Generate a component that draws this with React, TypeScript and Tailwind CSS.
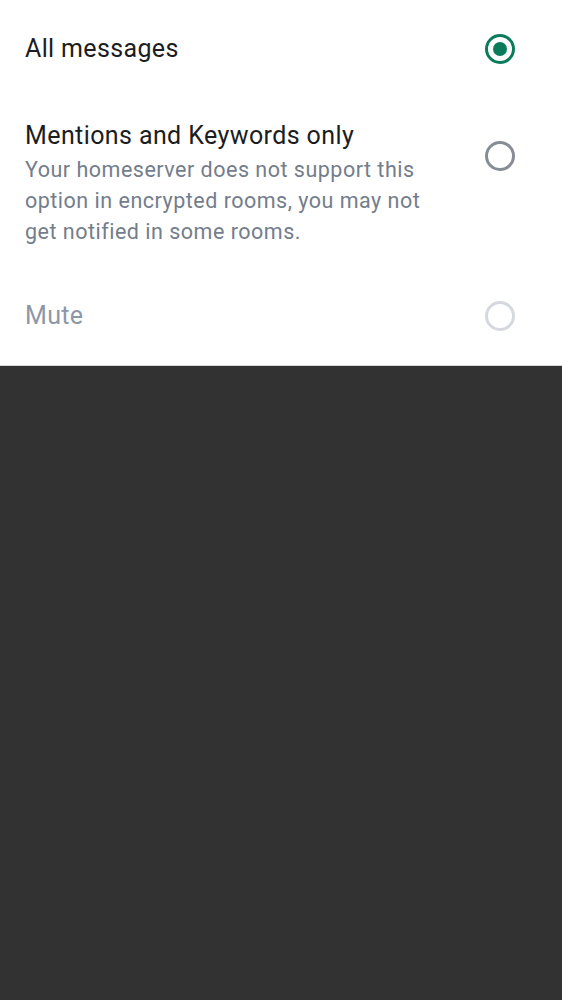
import { useState } from 'react'

type Option = {
  id: string
  label: string
  hint?: string
  disabled?: boolean
}

const options: Option[] = [
  { id: 'all', label: 'All messages' },
  {
    id: 'mentions',
    label: 'Mentions and Keywords only',
    hint: 'Your homeserver does not support this option in encrypted rooms, you may not get notified in some rooms.',
  },
  { id: 'mute', label: 'Mute', disabled: true },
]

function Radio({ checked, disabled }: { checked: boolean; disabled?: boolean }) {
  if (checked) {
    return (
      <span className="flex h-[30px] w-[30px] items-center justify-center rounded-full border-[3px] border-[#0a7c5c]">
        <span className="h-[14px] w-[14px] rounded-full bg-[#0a7c5c]" />
      </span>
    )
  }
  return (
    <span
      className={
        disabled
          ? 'block h-[30px] w-[30px] rounded-full border-[3px] border-[#d5d9de]'
          : 'block h-[30px] w-[30px] rounded-full border-[3px] border-[#868d97]'
      }
    />
  )
}

export default function App() {
  const [selected, setSelected] = useState('all')

  return (
    <div className="flex h-[1000px] w-full flex-col bg-[#323232] font-['Roboto',sans-serif]">
      <div className="border-b border-[#d6d6d6] bg-white">
        {/* first row */}
        <button
          onClick={() => setSelected('all')}
          className="flex h-[98px] w-full items-center justify-between pl-[25px] pr-[47px] text-left"
        >
          <span className="text-[25px] leading-[30px] tracking-[0.35px] text-[#1b1d22]">{options[0].label}</span>
          <Radio checked={selected === 'all'} />
        </button>

        <button
          onClick={() => setSelected('mentions')}
          className="flex w-full items-start justify-between pb-[20px] pl-[25px] pr-[47px] pt-[23px] text-left"
        >
          <span className="flex max-w-[415px] flex-col">
            <span className="text-[25px] leading-[30px] tracking-[0.4px] text-[#1b1d22]">{options[1].label}</span>
            <span className="mt-[3px] text-[21.5px] leading-[31px] tracking-[0.5px] text-[#737d8c]">{options[1].hint}</span>
          </span>
          <span className="mt-[20px]">
            <Radio checked={selected === 'mentions'} />
          </span>
        </button>

        <div className="flex h-[98px] w-full items-center justify-between pl-[25px] pr-[47px]">
          <span className="text-[25px] leading-[30px] tracking-[0.35px] text-[#8d97a5]">{options[2].label}</span>
          <Radio checked={false} disabled />
        </div>
      </div>
    </div>
  )
}
